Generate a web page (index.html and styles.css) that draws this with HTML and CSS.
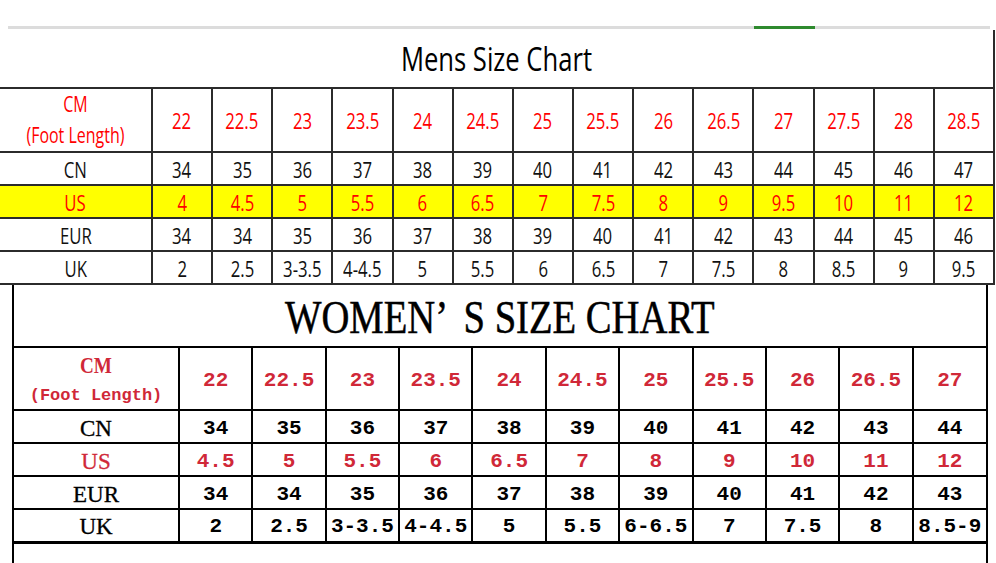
FILE: index.html
```html
<!DOCTYPE html>
<html lang="en">
<head>
<meta charset="utf-8">
<title>Size Chart</title>
<link rel="stylesheet" href="styles.css">
</head>
<body>
<div class="page">
  <div class="sheet-head">
    <div class="bar bar-a"></div>
    <div class="bar-active"></div>
    <div class="bar bar-b"></div>
  </div>

  <table class="mens">
    <colgroup><col class="m-first"><col span="14"></colgroup>
    <tr class="m-title"><td colspan="15"><span class="sq">Mens Size Chart</span></td></tr>
    <tr class="m-head">
      <td><span class="sq two">CM<br>(Foot Length)</span></td>
      <td><span class="sq">22</span></td><td><span class="sq">22.5</span></td><td><span class="sq">23</span></td><td><span class="sq">23.5</span></td><td><span class="sq">24</span></td><td><span class="sq">24.5</span></td><td><span class="sq">25</span></td><td><span class="sq">25.5</span></td><td><span class="sq">26</span></td><td><span class="sq">26.5</span></td><td><span class="sq">27</span></td><td><span class="sq">27.5</span></td><td><span class="sq">28</span></td><td><span class="sq">28.5</span></td>
    </tr>
    <tr class="m-row">
      <td><span class="sq">CN</span></td>
      <td><span class="sq">34</span></td><td><span class="sq">35</span></td><td><span class="sq">36</span></td><td><span class="sq">37</span></td><td><span class="sq">38</span></td><td><span class="sq">39</span></td><td><span class="sq">40</span></td><td><span class="sq">41</span></td><td><span class="sq">42</span></td><td><span class="sq">43</span></td><td><span class="sq">44</span></td><td><span class="sq">45</span></td><td><span class="sq">46</span></td><td><span class="sq">47</span></td>
    </tr>
    <tr class="m-row m-us">
      <td><span class="sq">US</span></td>
      <td><span class="sq">4</span></td><td><span class="sq">4.5</span></td><td><span class="sq">5</span></td><td><span class="sq">5.5</span></td><td><span class="sq">6</span></td><td><span class="sq">6.5</span></td><td><span class="sq">7</span></td><td><span class="sq">7.5</span></td><td><span class="sq">8</span></td><td><span class="sq">9</span></td><td><span class="sq">9.5</span></td><td><span class="sq">10</span></td><td><span class="sq">11</span></td><td><span class="sq">12</span></td>
    </tr>
    <tr class="m-row">
      <td><span class="sq">EUR</span></td>
      <td><span class="sq">34</span></td><td><span class="sq">34</span></td><td><span class="sq">35</span></td><td><span class="sq">36</span></td><td><span class="sq">37</span></td><td><span class="sq">38</span></td><td><span class="sq">39</span></td><td><span class="sq">40</span></td><td><span class="sq">41</span></td><td><span class="sq">42</span></td><td><span class="sq">43</span></td><td><span class="sq">44</span></td><td><span class="sq">45</span></td><td><span class="sq">46</span></td>
    </tr>
    <tr class="m-row">
      <td><span class="sq">UK</span></td>
      <td><span class="sq">2</span></td><td><span class="sq">2.5</span></td><td><span class="sq">3-3.5</span></td><td><span class="sq">4-4.5</span></td><td><span class="sq">5</span></td><td><span class="sq">5.5</span></td><td><span class="sq">6</span></td><td><span class="sq">6.5</span></td><td><span class="sq">7</span></td><td><span class="sq">7.5</span></td><td><span class="sq">8</span></td><td><span class="sq">8.5</span></td><td><span class="sq">9</span></td><td><span class="sq">9.5</span></td>
    </tr>
  </table>

  <div class="women">
    <div class="w-title"><span class="wt">WOMEN<span class="apos">’</span>S SIZE CHART</span></div>
    <table class="wtable">
      <colgroup><col class="w-first"><col span="11"></colgroup>
      <tr class="w-head">
        <td class="lab"><span class="cm">CM</span><br><span class="fl">(Foot Length)</span></td>
        <td class="num">22</td><td class="num">22.5</td><td class="num">23</td><td class="num">23.5</td><td class="num">24</td><td class="num">24.5</td><td class="num">25</td><td class="num">25.5</td><td class="num">26</td><td class="num">26.5</td><td class="num">27</td>
      </tr>
      <tr class="w-row">
        <td class="lab">CN</td>
        <td class="num">34</td><td class="num">35</td><td class="num">36</td><td class="num">37</td><td class="num">38</td><td class="num">39</td><td class="num">40</td><td class="num">41</td><td class="num">42</td><td class="num">43</td><td class="num">44</td>
      </tr>
      <tr class="w-row w-us">
        <td class="lab">US</td>
        <td class="num">4.5</td><td class="num">5</td><td class="num">5.5</td><td class="num">6</td><td class="num">6.5</td><td class="num">7</td><td class="num">8</td><td class="num">9</td><td class="num">10</td><td class="num">11</td><td class="num">12</td>
      </tr>
      <tr class="w-row">
        <td class="lab">EUR</td>
        <td class="num">34</td><td class="num">34</td><td class="num">35</td><td class="num">36</td><td class="num">37</td><td class="num">38</td><td class="num">39</td><td class="num">40</td><td class="num">41</td><td class="num">42</td><td class="num">43</td>
      </tr>
      <tr class="w-row w-last">
        <td class="lab">UK</td>
        <td class="num">2</td><td class="num">2.5</td><td class="num">3-3.5</td><td class="num">4-4.5</td><td class="num">5</td><td class="num">5.5</td><td class="num">6-6.5</td><td class="num">7</td><td class="num">7.5</td><td class="num">8</td><td class="num">8.5-9</td>
      </tr>
    </table>
  </div>
</div>
</body>
</html>
```

FILE: styles.css
```css
* { box-sizing: border-box; }
html, body { margin: 0; padding: 0; background: #fff; }

.page {
  width: 996px;
  height: 563px;
  overflow: hidden;
}

/* spreadsheet header strip */
.sheet-head {
  height: 30px;
  padding: 26px 0 1px 8px;
  display: flex;
}
.bar { background: #dcdcdc; }
.bar-a { width: 746px; }
.bar-active { width: 61px; background: #2e8a2e; }
.bar-b { width: 175px; }

/* mens table */
.mens {
  width: 995px;
  border-collapse: collapse;
  table-layout: fixed;
  font-family: "Open Sans", "Liberation Sans", sans-serif;
  font-size: 22px;
  color: #111;
}
.mens col.m-first { width: 152px; }
.mens td {
  border: 2px solid #2b2b2b;
  padding: 0;
  text-align: center;
  vertical-align: middle;
  line-height: 24px;
}
.mens td:first-child { border-left: none; }
.mens .m-title td {
  border-top: none;
  height: 58px;
  font-size: 32px;
  line-height: 40px;
  color: #000;
}
.mens .m-head td { height: 64px; color: #ff0000; }
.mens .m-row td { height: 33px; }
.mens .m-us td { background: #ffff00; color: #ff0000; }

.sq {
  display: inline-block;
  transform: scaleX(0.76);
  white-space: nowrap;
}
.m-title .sq { transform: scaleX(0.8); }
.sq.two { line-height: 31px; font-size: 21px; }

/* womens table */
.women {
  height: 290px;
  margin-left: 12px;
  width: 976px;
  border-left: 2px solid #000;
  border-right: 2px solid #000;
  font-family: "Liberation Serif", "Times New Roman", serif;
  color: #000;
}
.w-title {
  height: 61px;
  display: flex;
  align-items: center;
  justify-content: center;
  font-size: 46px;
}
.wt {
  display: inline-block;
  transform: scaleX(0.84);
  white-space: nowrap;
  -webkit-text-stroke: 0.5px #000;
  padding-top: 4px;
}
.apos { margin-right: 0.4em; }

.wtable {
  width: 100%;
  border-collapse: collapse;
  table-layout: fixed;
}
.wtable col.w-first { width: 165px; }
.wtable td {
  border: 2px solid #000;
  padding: 0;
  text-align: center;
  vertical-align: middle;
  white-space: nowrap;
}
.wtable td:first-child { border-left: none; }
.wtable td:last-child { border-right: none; }
.wtable .w-head td { height: 63px; color: #d02838; }
.wtable .w-row td { height: 33px; }
.wtable .w-us td { color: #d02838; }
.wtable .w-last td { border-bottom: 3px solid #000; }

.wtable .num {
  font-family: "Liberation Mono", "Courier New", monospace;
  font-weight: bold;
  font-size: 21px;
  padding-top: 3px;
}
.wtable .lab {
  font-size: 23px;
  line-height: 27px;
  padding-top: 3px;
  -webkit-text-stroke: 0.3px currentColor;
}
.cm {
  display: inline-block;
  font-weight: bold;
  font-size: 24px;
  transform: scaleX(0.8);
  -webkit-text-stroke: 0;
}
.fl {
  font-family: "Liberation Mono", "Courier New", monospace;
  font-weight: bold;
  font-size: 17px;
  -webkit-text-stroke: 0;
}
```
